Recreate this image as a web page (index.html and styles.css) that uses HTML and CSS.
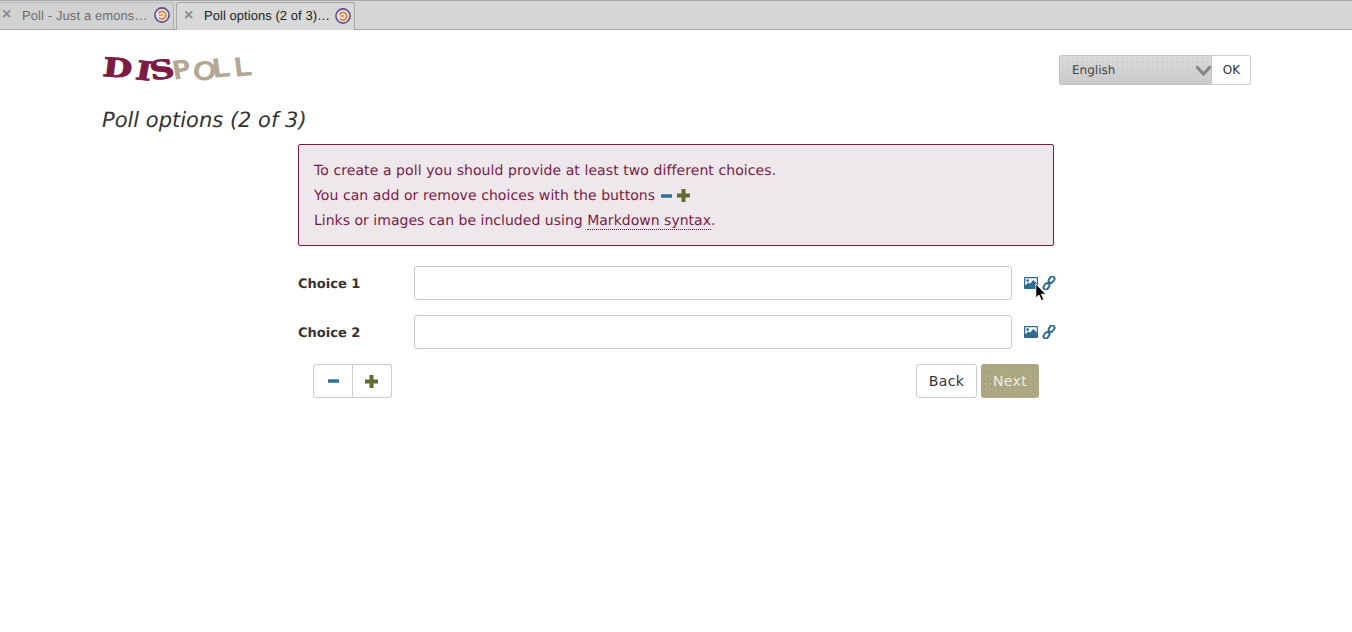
FILE: index.html
```html
<!DOCTYPE html>
<html lang="en">
<head>
<meta charset="utf-8">
<title>Poll options (2 of 3)</title>
<link rel="stylesheet" href="styles.css">
</head>
<body>
<svg width="0" height="0" class="defs">
  <defs>
    <symbol id="picture" viewBox="0 0 14 12">
      <rect width="14" height="12" rx="1" fill="#2b6a8c"/>
      <rect x="1.2" y="1.2" width="11.6" height="7" fill="#f2f6f8"/>
      <circle cx="3.6" cy="3.6" r="1.3" fill="#2b6a8c"/>
      <path d="M1.2 8.4 L4.5 5.6 L6 6.8 L9.4 3 L12.8 6.6 V8.8 H1.2 Z" fill="#2b6a8c"/>
    </symbol>
    <symbol id="chain" viewBox="0 0 14 14">
      <g fill="none" stroke="#2b6a8c" stroke-width="1.9">
        <rect x="6" y="1.4" width="7" height="4.6" rx="2.3" transform="rotate(-55 9.5 3.7)"/>
        <rect x="1" y="8" width="7" height="4.6" rx="2.3" transform="rotate(-55 4.5 10.3)"/>
        <path d="M5.6 8.4 L8.4 5.6"/>
      </g>
    </symbol>
    <symbol id="minus" viewBox="0 0 12 4">
      <rect width="12" height="4" rx=".5" fill="#2f7195"/>
    </symbol>
    <symbol id="plus" viewBox="0 0 13 13">
      <path d="M4.5 0 H8.5 V4.5 H13 V8.5 H8.5 V13 H4.5 V8.5 H0 V4.5 H4.5 Z" fill="#636b33"/>
    </symbol>
    <symbol id="reload" viewBox="0 0 16 16">
      <circle cx="8" cy="8" r="7.1" fill="#e4e0e8" stroke="#5d4f8f" stroke-width="1.6"/>
      <path d="M4.6 6.2 A3.9 3.9 0 1 1 5 10.8" fill="none" stroke="#e8862c" stroke-width="1.7"/>
      <path d="M5 8 H9" stroke="#e8862c" stroke-width="1.4"/>
    </symbol>
  </defs>
</svg>

<nav class="tabbar">
  <div class="tab tab-inactive">
    <span class="tab-close">×</span>
    <span class="tab-title">Poll - Just a emons…</span>
    <svg class="tab-icon"><use href="#reload"/></svg>
  </div>
  <div class="tab tab-active">
    <span class="tab-close">×</span>
    <span class="tab-title">Poll options (2 of 3)…</span>
    <svg class="tab-icon"><use href="#reload"/></svg>
  </div>
</nav>

<div class="page">
  <header class="header">
    <svg class="logo" viewBox="0 0 158 32" role="img" aria-label="DISPOLL">
      <g transform="scale(1.3 1)">
        <text class="logo-dark" x="0 25 38" y="22 25 26" rotate="5 8 -8">DIS</text>
      </g>
      <g transform="scale(1.2 1)">
        <text class="logo-light" x="60 75 93 111" y="25 24 23 22" rotate="-8 8 -6 -6">POLL</text>
      </g>
    </svg>
    <form class="lang">
      <div class="lang-select">
        <span>English</span>
        <svg class="chevron" viewBox="0 0 17 11"><path d="M1.5 1.5 L8.5 9 L15.5 1.5" fill="none" stroke="#858585" stroke-width="3.2"/></svg>
      </div>
      <button type="button" class="lang-ok">OK</button>
    </form>
  </header>

  <h1 class="title">Poll options (2 of 3)</h1>

  <main class="content">
    <div class="alert">
      <p>To create a poll you should provide at least two different choices.</p>
      <p>You can add or remove choices with the buttons
        <svg class="alert-minus"><use href="#minus"/></svg>
        <svg class="alert-plus"><use href="#plus"/></svg>
      </p>
      <p class="alert-last">Links or images can be included using <a href="#">Markdown syntax</a>.</p>
    </div>

    <div class="choice">
      <label class="choice-label">Choice 1</label>
      <input class="choice-input" type="text">
      <span class="choice-tools">
        <svg class="tool-picture"><use href="#picture"/></svg>
        <svg class="tool-chain"><use href="#chain"/></svg>
      </span>
    </div>
    <div class="choice">
      <label class="choice-label">Choice 2</label>
      <input class="choice-input" type="text">
      <span class="choice-tools">
        <svg class="tool-picture"><use href="#picture"/></svg>
        <svg class="tool-chain"><use href="#chain"/></svg>
      </span>
    </div>

    <div class="actions">
      <div class="stepper">
        <button type="button" class="step"><svg class="step-minus"><use href="#minus"/></svg></button>
        <button type="button" class="step step-add"><svg class="step-plus"><use href="#plus"/></svg></button>
      </div>
      <div class="nav-buttons">
        <button type="button" class="btn">Back</button>
        <button type="button" class="btn btn-next">Next</button>
      </div>
    </div>
  </main>
</div>

<svg class="cursor" viewBox="0 0 12 19"><path d="M.8.8 V15 L4 12 L6.4 17.6 L8.8 16.6 L6.4 11.2 H10.8 Z" fill="#000" stroke="#fff" stroke-width=".9"/></svg>
</body>
</html>
```
FILE: styles.css
```css
* { box-sizing: border-box; }
html, body { height: 100%; }
body {
  margin: 0;
  background: #fff;
  color: #333;
  font-family: "DejaVu Sans", sans-serif;
  font-size: 14px;
  text-rendering: geometricPrecision;
  overflow: hidden;
}
.defs { position: absolute; }

.tabbar {
  display: flex;
  align-items: flex-end;
  gap: 2px;
  height: 30px;
  background: #d6d6d6;
  border-top: 1px solid #a8a8a8;
  border-bottom: 1px solid #a6a6a6;
  font-family: "Liberation Sans", sans-serif;
  font-size: 13px;
}
.tab {
  display: flex;
  align-items: center;
  height: 28px;
  margin-bottom: -1px;
  padding-bottom: 2px;
}
.tab-inactive {
  width: 174px;
  height: 27px;
  margin-bottom: 0;
  padding-left: 2px;
  color: #6e6e6e;
  letter-spacing: .1px;
  background: #d2d2d2;
  border-right: 1px solid #b0b0b0;
  border-top: 1px solid #bcbcbc;
  border-radius: 0 3px 0 0;
}
.tab-active {
  width: 179px;
  padding-left: 7px;
  color: #222;
  letter-spacing: .05px;
  background: #d8d8d8;
  border: 1px solid #a8a8a8;
  border-bottom: 0;
  border-radius: 3px 3px 0 0;
}
.tab-close {
  width: 10px;
  color: #8c8c8c;
  font-size: 16px;
  font-weight: bold;
  line-height: 1;
}
.tab-title { flex: 1; margin-left: 10px; white-space: nowrap; }
.tab-icon { width: 16px; height: 16px; margin-right: 3px; }

.page { padding: 0 101px 0 102px; }

.header {
  display: flex;
  justify-content: space-between;
  align-items: flex-start;
  padding-top: 24px;
}
.logo { display: block; width: 158px; height: 32px; margin-bottom: -1px; overflow: visible; }
.logo-dark {
  fill: #7b1b45;
  stroke: #7b1b45;
  stroke-width: .9px;
  font-family: "DejaVu Serif", serif;
  font-size: 26px;
  font-weight: bold;
}
.logo-light {
  fill: #b3a796;
  stroke: #b3a796;
  stroke-width: 1.4px;
  font-family: "DejaVu Sans", sans-serif;
  font-size: 24px;
}

.lang { display: flex; height: 30px; margin-top: 1px; }
.lang-select {
  display: flex;
  align-items: center;
  justify-content: space-between;
  width: 153px;
  padding: 0 0 0 12px;
  color: #444;
  font-size: 12px;
  background:
    radial-gradient(circle, #c9c9c9 .5px, transparent 1px) 0 0 / 5px 4px,
    linear-gradient(#dadada, #cbcbcb);
  border: 1px solid #c4c4c4;
  border-radius: 2px 0 0 2px;
}
.chevron { width: 17px; height: 11px; margin-right: -1px; }
.lang-ok {
  width: 39px;
  padding: 0 0 0 1px;
  color: #333;
  font: 12px "DejaVu Sans", sans-serif;
  background: #fff;
  border: 1px solid #ccc;
  border-left: 0;
  border-radius: 0 3px 3px 0;
}

.title {
  margin: 21px 0 0;
  color: #333;
  font-size: 21px;
  font-style: italic;
  font-weight: normal;
  line-height: 29px;
}

.content { width: 756px; margin: 9px 0 0 196px; }

.alert {
  height: 102px;
  padding: 14px 15px;
  color: #7b1b45;
  background: #eee8ec;
  border: 1px solid #7b1b45;
  border-radius: 2px;
}
.alert p { margin: 0; line-height: 25px; letter-spacing: .08px; white-space: nowrap; }
.alert .alert-last { letter-spacing: .02px; }
.alert a { color: inherit; text-decoration: none; border-bottom: 1px dotted #7b1b45; }
.alert-minus { width: 11px; height: 4px; margin-left: 1px; vertical-align: 2px; }
.alert-plus { width: 13px; height: 13px; margin-left: 1px; vertical-align: -2px; }

.choice {
  display: flex;
  align-items: center;
  height: 34px;
  margin-top: 15px;
}
.alert + .choice { margin-top: 20px; }
.choice-label { flex: none; width: 116px; padding-top: 2px; font-size: 13px; font-weight: bold; }
.choice-input {
  flex: none;
  width: 598px;
  height: 34px;
  background: #fff;
  border: 1px solid #c8c8c8;
  border-radius: 3px;
}
.choice-tools { display: flex; flex: none; align-items: center; gap: 4px; margin-left: 12px; }
.tool-picture { width: 14px; height: 12px; }
.tool-chain { width: 14px; height: 14px; }

.actions {
  display: flex;
  justify-content: space-between;
  margin: 15px 15px 0;
}
.stepper { display: flex; }
.step {
  display: flex;
  align-items: center;
  justify-content: center;
  width: 40px;
  height: 34px;
  padding: 0;
  background: #fff;
  border: 1px solid #ccc;
}
.step:first-child { border-radius: 3px 0 0 3px; }
.step-add { width: 39px; padding-right: 2px; border-left: 0; border-radius: 0 3px 3px 0; }
.step-minus { width: 11px; height: 4px; }
.step-plus { width: 13px; height: 13px; }

.nav-buttons { display: flex; gap: 4px; }
.btn {
  width: 61px;
  height: 34px;
  padding: 0;
  color: #333;
  font: 14px "DejaVu Sans", sans-serif;
  letter-spacing: .4px;
  background: #fff;
  border: 1px solid #ccc;
  border-radius: 3px;
}
.btn-next {
  width: 58px;
  color: #ecebe1;
  background:
    radial-gradient(circle, #9a9568 .5px, transparent 1px) 0 0 / 7px 5px,
    radial-gradient(circle, #c4c0a6 .5px, transparent 1px) 2px 2px / 5px 7px,
    #aca782;
  border: 0;
}

.cursor { position: absolute; left: 1035px; top: 283px; width: 12px; height: 19px; }
```
